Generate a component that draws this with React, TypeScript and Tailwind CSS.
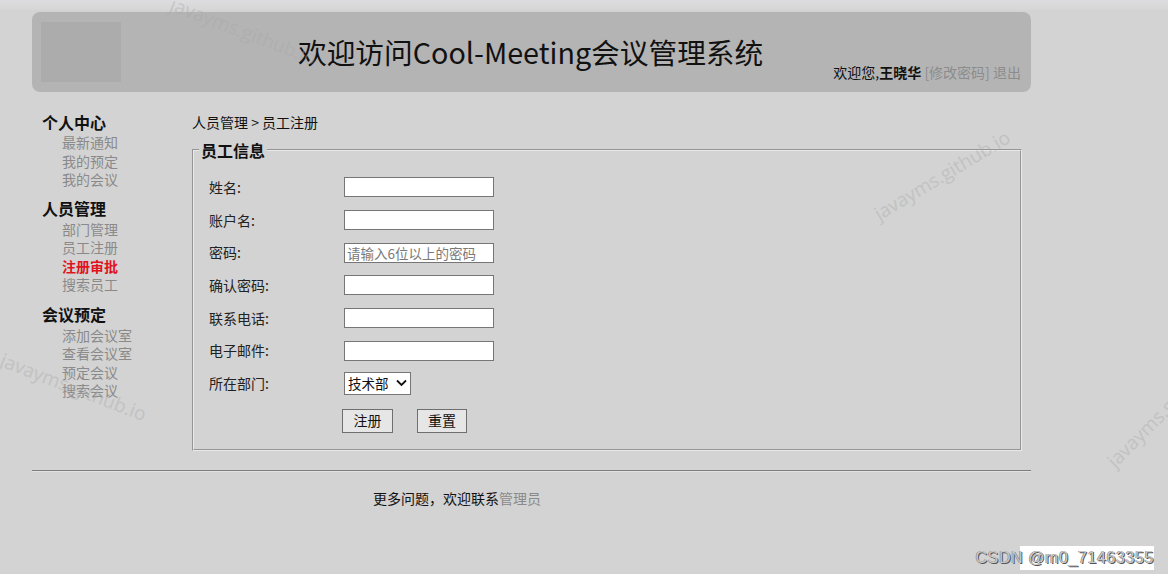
import React from "react";

const FONT = { fontFamily: '"Noto Sans CJK SC", "Noto Sans", sans-serif' };

function Watermark({ className }: { className: string }) {
  return (
    <div
      className={
        "pointer-events-none absolute whitespace-nowrap text-[19px] leading-none text-[#a9a9a9] opacity-40 " +
        className
      }
      style={{ fontFamily: '"Open Sans", "Noto Sans", sans-serif' }}
    >
      javayms.github.io
    </div>
  );
}

function SideGroup({
  title,
  items,
  active,
  first,
  gap,
}: {
  title: string;
  items: string[];
  active?: string;
  first?: boolean;
  gap?: string;
}) {
  return (
    <div className={first ? "" : gap ?? "mt-[8px]"}>
      <div className="text-[16px] font-bold leading-[20px] text-[#111]">{title}</div>
      <ul className={(first ? "mt-[1px]" : "mt-[2px]") + " pl-[20px]"}>
        {items.map((it) => (
          <li
            key={it}
            className={
              "text-[14px] leading-[18.5px] " +
              (it === active ? "font-bold text-[#e0141e]" : "text-[#8a8a8a]")
            }
          >
            {it}
          </li>
        ))}
      </ul>
    </div>
  );
}

function Row({ label, children }: { label: string; children: React.ReactNode }) {
  return (
    <div className="flex h-[32.7px] items-center">
      <div className="w-[135px] text-[14px] text-[#222]">{label}</div>
      {children}
    </div>
  );
}

function TextInput({ placeholder }: { placeholder?: string }) {
  return (
    <input
      placeholder={placeholder}
      className="h-[20px] w-[150px] border border-[#767676] bg-white px-[2px] text-[13.5px] leading-[18px] text-[#222] placeholder:text-[#7a7a7a] outline-none"
    />
  );
}

export default function App() {
  return (
    <div
      className="relative h-[574px] w-[1168px] overflow-hidden bg-[#d3d3d3]"
      style={FONT}
    >
      <div className="h-[10px] bg-gradient-to-b from-[#dddde0] to-[#d6d6d6]" />
      <div className="ml-[32px] w-[999px]">
        {/* header */}
        <div className="mt-[2px] flex h-[80px] rounded-[8px] bg-[#b4b4b4]">
          <div className="ml-[9px] mt-[10px] h-[60px] w-[80px] bg-[#acacac]" />
          <div className="relative flex-1">
            <div className="absolute left-[177px] top-[21px] text-[28.7px] leading-[38px] text-[#111]">
              欢迎访问Cool-Meeting会议管理系统
            </div>
            <div className="absolute bottom-[11px] right-[10px] text-[14px] leading-[18px] text-[#111]">
              欢迎您,<span className="font-bold">王晓华</span>{" "}
              <span className="text-[#8c8c8c]">[修改密码]</span>{" "}
              <span className="text-[#8c8c8c]">退出</span>
            </div>
          </div>
        </div>

        {/* main */}
        <div className="mt-[20px] flex">
          <div className="w-[160px] pl-[10px]">
            <SideGroup first title="个人中心" items={["最新通知", "我的预定", "我的会议"]} />
            <SideGroup
              title="人员管理"
              gap="mt-[9px]"
              items={["部门管理", "员工注册", "注册审批", "搜索员工"]}
              active="注册审批"
            />
            <SideGroup
              title="会议预定"
              gap="mt-[10px]"
              items={["添加会议室", "查看会议室", "预定会议", "搜索会议"]}
            />
          </div>
          <div className="w-[830px]">
            <div className="text-[14px] leading-[20px] text-[#111]">
              人员管理&nbsp;&gt;&nbsp;员工注册
            </div>
            <fieldset className="mt-[9px] border-2 border-[#e9e9e9] px-[15px] pb-[16px] [border-style:groove]">
              <legend className="ml-[-10px] px-[2px] text-[16px] font-bold leading-[18px] text-[#111]">
                员工信息
              </legend>
              <div className="mt-[12px]">
                <Row label="姓名:">
                  <TextInput />
                </Row>
                <Row label="账户名:">
                  <TextInput />
                </Row>
                <Row label="密码:">
                  <TextInput placeholder="请输入6位以上的密码" />
                </Row>
                <Row label="确认密码:">
                  <TextInput />
                </Row>
                <Row label="联系电话:">
                  <TextInput />
                </Row>
                <Row label="电子邮件:">
                  <TextInput />
                </Row>
                <Row label="所在部门:">
                  <div className="flex h-[23px] w-[67px] items-center justify-between border border-[#767676] bg-white pl-[3px] pr-[3px] text-[13.5px] text-[#111]">
                    <span>技术部</span>
                    <svg width="11" height="8" viewBox="0 0 11 8">
                      <path d="M1 1.5 L5.5 6 L10 1.5" fill="none" stroke="#111" strokeWidth="1.8" />
                    </svg>
                  </div>
                </Row>
                <div className="mt-[9px] flex pl-[133px]">
                  <button className="h-[24px] w-[51px] border border-[#6f6f6f] bg-[#e6e6e6] text-[14px] text-[#111]">
                    注册
                  </button>
                  <button className="ml-[24px] h-[24px] w-[50px] border border-[#6f6f6f] bg-[#e6e6e6] text-[14px] text-[#111]">
                    重置
                  </button>
                </div>
              </div>
            </fieldset>
          </div>
        </div>

        {/* footer */}
        <div className="mt-[19px] border-t border-[#7d7d7d] border-b border-b-[#e2e2e2]" />
        <div className="mt-[17px] pl-[341px] text-[14px] leading-[18px] text-[#111]">
          更多问题，欢迎联系<span className="text-[#8a8a8a]">管理员</span>
        </div>
      </div>

      {/* watermarks */}
      <Watermark className="left-[166px] top-[22px] rotate-[21deg]" />
      <Watermark className="left-[865px] top-[166px] -rotate-[31deg]" />
      <Watermark className="left-[-4px] top-[378px] rotate-[21deg]" />
      <Watermark className="left-[1088px] top-[400px] -rotate-[45deg]" />

      {/* CSDN mark */}
      <div className="absolute bottom-[7px] right-[14px] flex items-center">
        <div className="absolute right-0 top-[-3px] h-[24px] w-[134px] bg-white" />
        <span
          className="relative text-[16px] leading-[18px] tracking-[0.6px] text-[#c8c8c8]"
          style={{
            fontFamily: '"Liberation Sans", Arial, sans-serif',
            textShadow: "1px 1px 0 #555, -0.5px -0.5px 0 #777",
          }}
        >
          CSDN @m0_71463355
        </span>
      </div>
    </div>
  );
}
